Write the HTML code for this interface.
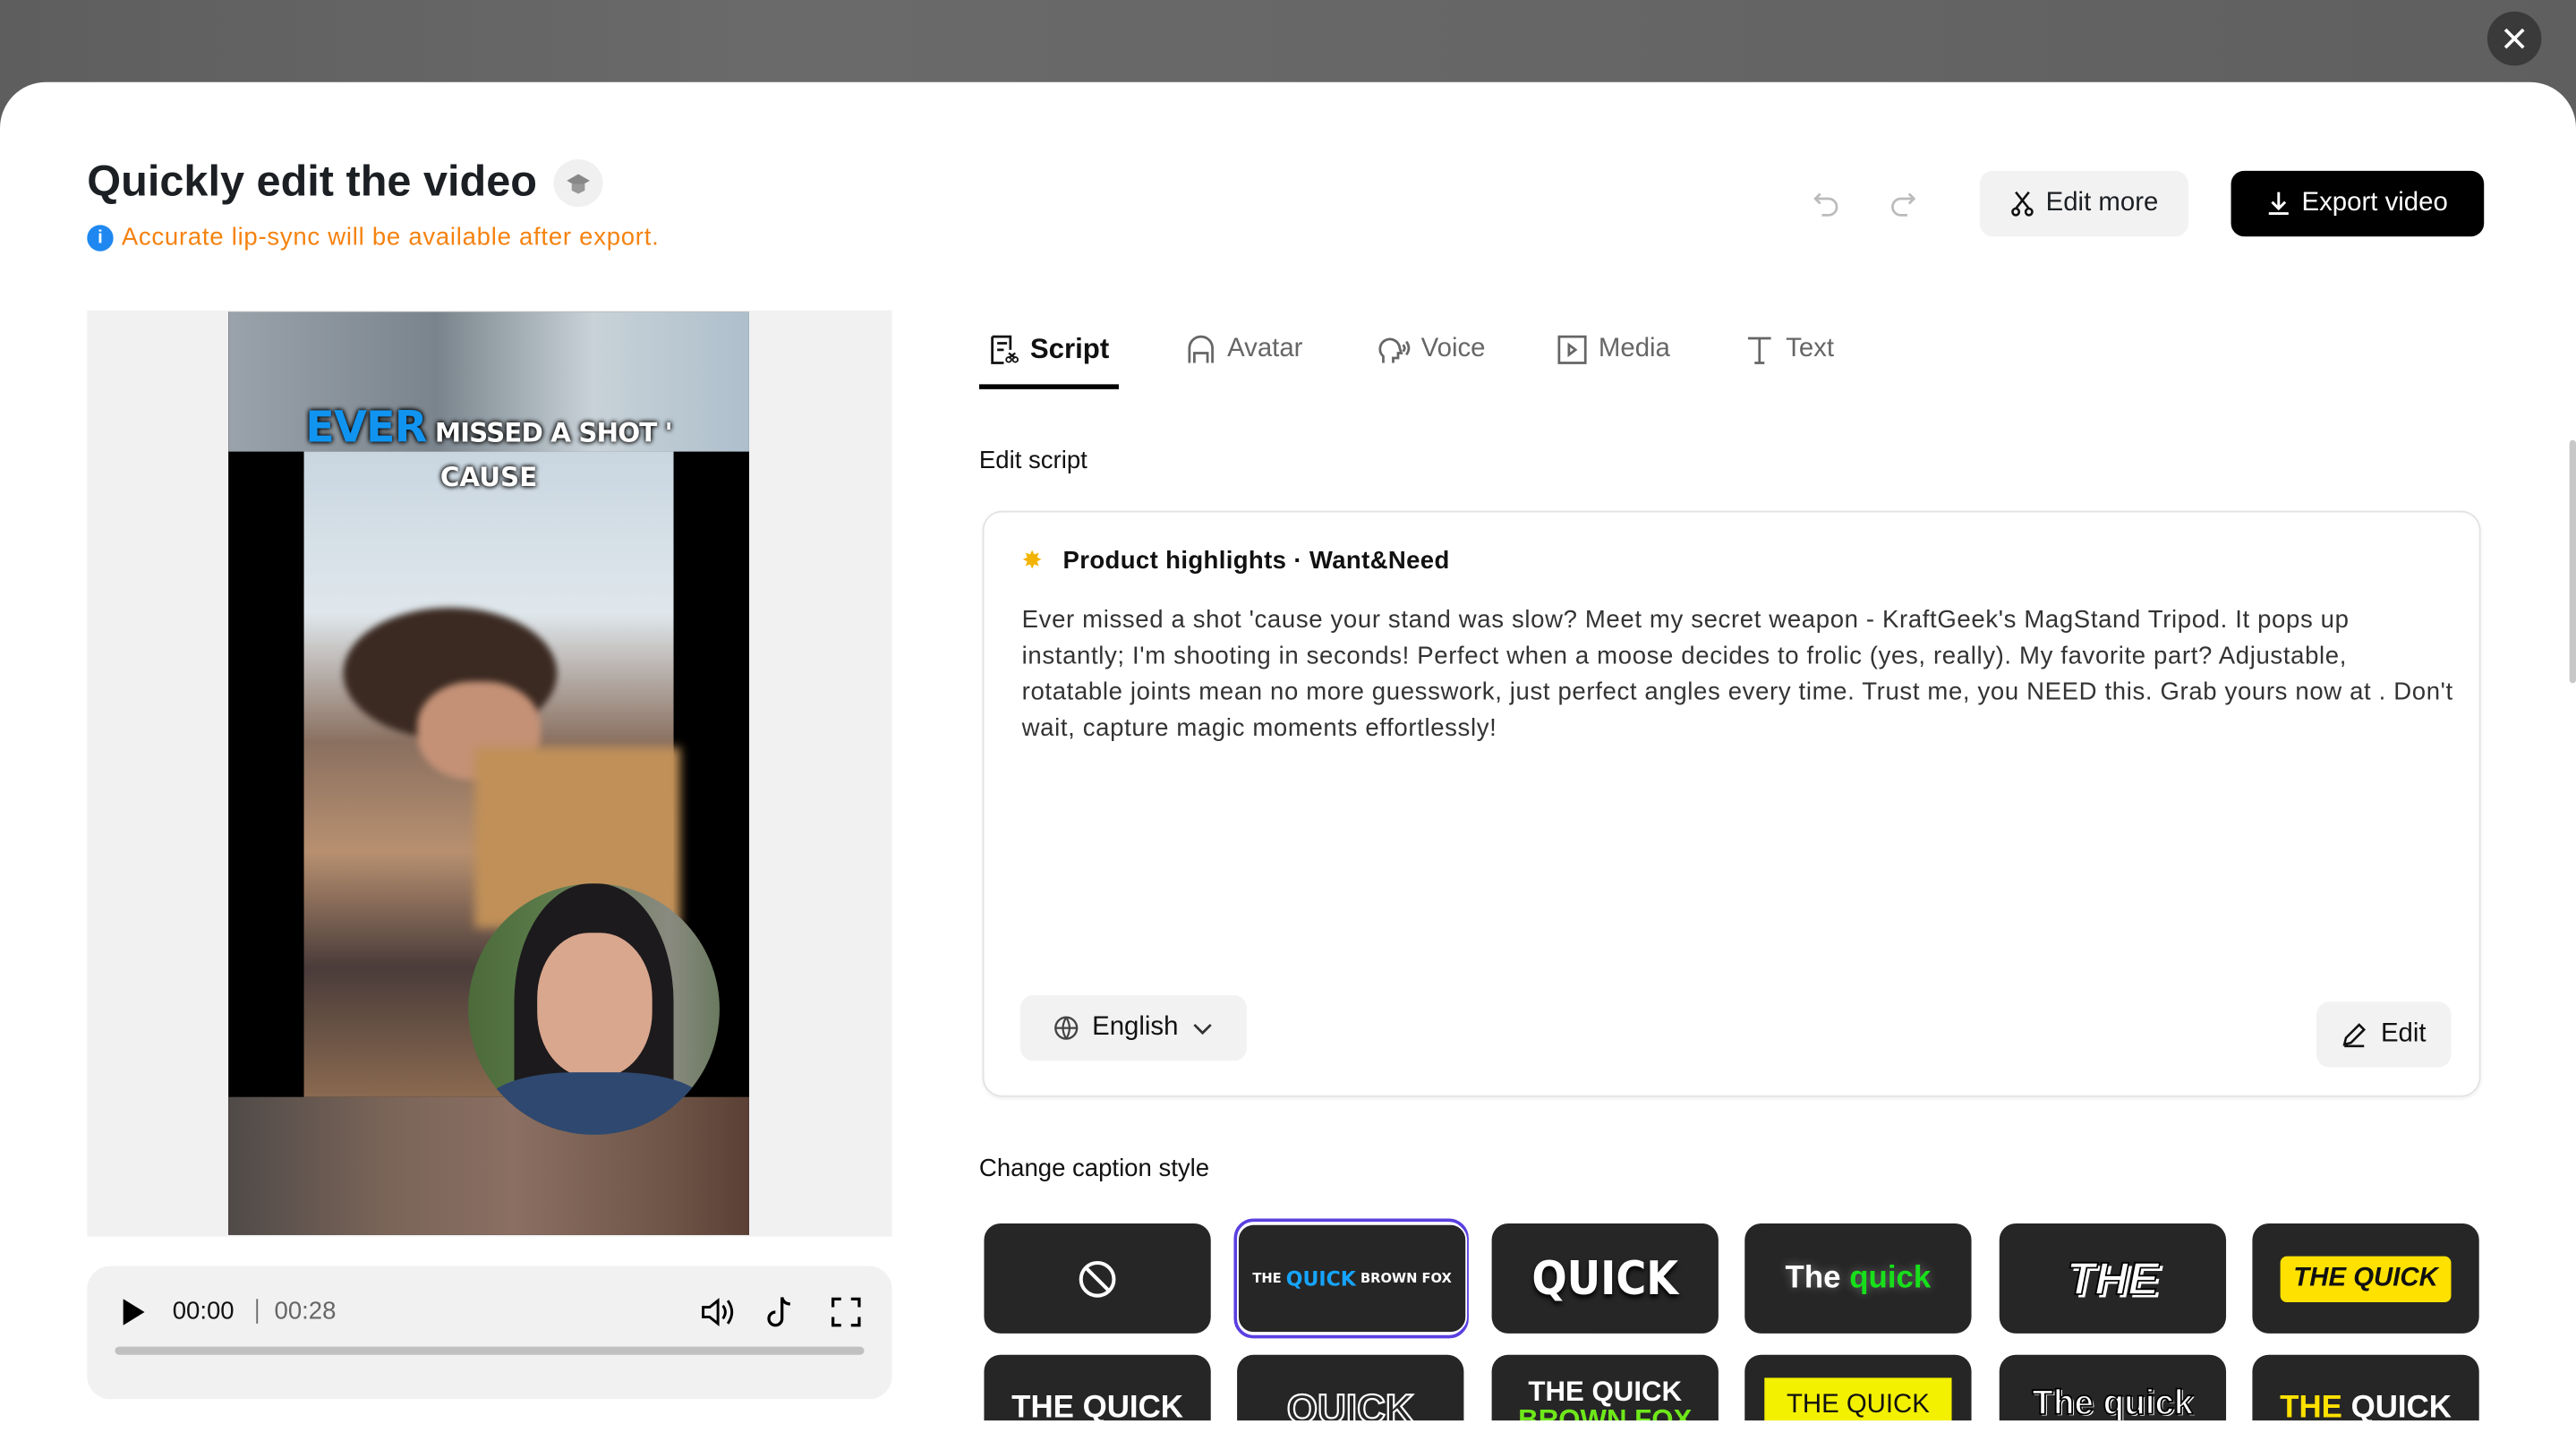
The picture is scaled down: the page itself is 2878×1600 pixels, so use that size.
<!DOCTYPE html>
<html><head><meta charset="utf-8"><style>
*{box-sizing:border-box;margin:0;padding:0}
html,body{width:2878px;height:1600px;overflow:hidden;background:#fff}
#w{position:absolute;left:0;top:0;width:1568px;height:872px;transform:scale(1.83546,1.83486);transform-origin:0 0;font-family:"Liberation Sans",sans-serif;color:#1c1f23;overflow:hidden}
.a{position:absolute}
.bg{left:0;top:0;width:1568px;height:80px;background:linear-gradient(90deg,#5e5e5e,#6a6a6a 30%,#666 60%,#5f5f5f)}
.modal{left:0;top:50px;width:1568px;height:840px;background:#fff;border-radius:28px 28px 0 0}
.btn{border-radius:8px;display:flex;align-items:center;justify-content:center;font-size:16px}
.tab{top:203px;font-size:16px;color:#666;display:flex;align-items:center;gap:6px}
.tile{width:138px;height:67px;background:#262626;border-radius:10px;display:flex;align-items:center;justify-content:center;color:#fff;font-weight:bold;overflow:hidden}
.ic{stroke:#666;fill:none;stroke-width:1.5}
</style></head><body><div id="w">
<div class="a bg"></div>
<div class="a" style="left:1514px;top:7px;width:33px;height:33px;border-radius:50%;background:#3a3a3a"></div>
<svg class="a" style="left:1522px;top:15px" width="17" height="17" viewBox="0 0 17 17"><path d="M3 3L14 14M14 3L3 14" stroke="#fff" stroke-width="2"/></svg>
<div class="a modal"></div>

<div class="a" style="left:53px;top:95px;font-size:26.5px;font-weight:600">Quickly edit the video</div>
<div class="a" style="left:337px;top:97px;width:30px;height:29px;border-radius:50%;background:#f0f0f0"></div>
<svg class="a" style="left:343px;top:103px" width="18" height="18" viewBox="0 0 18 18"><path d="M9 3L16 7L9 11L2 7Z" fill="#888"/><path d="M5 9v4l4 2 4-2V9" fill="#999"/></svg>
<div class="a" style="left:53px;top:137px;width:16px;height:16px;border-radius:50%;background:#1e88f0;color:#fff;font-size:11px;font-weight:bold;text-align:center;line-height:16px">i</div>
<div class="a" style="left:74px;top:136px;font-size:15px;color:#f5820f;letter-spacing:0.4px">Accurate lip-sync will be available after export.</div>

<svg class="a" style="left:1103px;top:115px" width="18" height="18" viewBox="0 0 18 18"><path d="M5 3L2 6L5 9M2 6h8a5 5 0 010 10H6" class="ic" style="stroke:#bbb"/></svg>
<svg class="a" style="left:1149px;top:115px" width="18" height="18" viewBox="0 0 18 18"><path d="M13 3L16 6L13 9M16 6H8a5 5 0 000 10h4" class="ic" style="stroke:#bbb"/></svg>
<div class="a btn" style="left:1205px;top:104px;width:127px;height:40px;background:#f2f2f2;gap:6px"><svg width="16" height="16" viewBox="0 0 16 16"><path d="M4 1l8 10M12 1L4 11" stroke="#111" stroke-width="1.4" fill="none"/><circle cx="4" cy="13" r="2" stroke="#111" fill="none" stroke-width="1.4"/><circle cx="12" cy="13" r="2" stroke="#111" fill="none" stroke-width="1.4"/></svg>Edit more</div>
<div class="a btn" style="left:1358px;top:104px;width:154px;height:40px;background:#000;color:#fff;gap:7px"><svg width="14" height="16" viewBox="0 0 14 16"><path d="M7 1v10M3 7l4 4 4-4M1 14h12" stroke="#fff" stroke-width="1.6" fill="none"/></svg>Export video</div>

<div class="a" style="left:53px;top:189px;width:490px;height:564px;background:#f1f1f1"></div>
<div class="a" style="left:139px;top:190px;width:317px;height:562px;background:#000;overflow:hidden">
 <div class="a" style="left:0;top:0;width:317px;height:85px;background:linear-gradient(90deg,#9aa3ab,#7a848c 40%,#c8d2d8 70%,#aebfcc)"></div>
 <div class="a" style="left:46px;top:85px;width:225px;height:393px;background:linear-gradient(180deg,#c9d6e0 0%,#dfe7ec 25%,#8a7060 45%,#b89070 62%,#4a3c3a 80%,#8a6a50 100%)"></div>
 <div class="a" style="left:70px;top:180px;width:130px;height:80px;border-radius:50%;background:#3b2a22;filter:blur(2px)"></div>
 <div class="a" style="left:115px;top:225px;width:75px;height:60px;border-radius:45%;background:#c49176;filter:blur(2px)"></div>
 <div class="a" style="left:150px;top:265px;width:125px;height:110px;background:#c09058;filter:blur(3px)"></div>
 <div class="a" style="left:0;top:478px;width:317px;height:84px;background:linear-gradient(90deg,#4f4a48,#7a6458 30%,#8a6f62 55%,#6e5446 85%,#5b4035)"></div>
 <div class="a" style="left:146px;top:348px;width:153px;height:153px;border-radius:50%;background:linear-gradient(90deg,#4c6a3a,#5a7a4a 30%,#8a8a80 80%,#6a7a60);overflow:hidden">
  <div class="a" style="left:28px;top:0;width:97px;height:150px;border-radius:48% 48% 0 0;background:#1c1a1c"></div>
  <div class="a" style="left:42px;top:30px;width:70px;height:88px;border-radius:45%;background:#d9a68e"></div>
  <div class="a" style="left:10px;top:115px;width:135px;height:50px;border-radius:40% 40% 0 0;background:#2e4870"></div>
 </div>
 <div class="a" style="left:0;top:56px;width:317px;text-align:center;font-family:'DejaVu Sans',sans-serif;font-weight:900;color:#fff;font-size:16px;text-shadow:0 0 3px #000,0 0 3px #000;letter-spacing:-0.5px"><span style="color:#1094f0;font-size:26px">EVER</span> MISSED A SHOT '</div>
 <div class="a" style="left:0;top:91px;width:317px;text-align:center;font-family:'DejaVu Sans',sans-serif;font-weight:900;color:#fff;font-size:16px;text-shadow:0 0 3px #000,0 0 3px #000">CAUSE</div>
</div>

<div class="a" style="left:53px;top:771px;width:490px;height:81px;background:#f1f1f1;border-radius:14px"></div>
<svg class="a" style="left:73px;top:790px" width="16" height="18" viewBox="0 0 16 18"><path d="M2 1L15 9L2 17Z" fill="#000"/></svg>
<div class="a" style="left:105px;top:790px;font-size:15px;color:#111">00:00</div>
<div class="a" style="left:156px;top:791px;width:1px;height:15px;background:#666"></div>
<div class="a" style="left:167px;top:790px;font-size:15px;color:#666">00:28</div>
<svg class="a" style="left:426px;top:789px" width="22" height="20" viewBox="0 0 22 20"><path d="M2 7h4l5-4v14l-5-4H2Z" stroke="#000" stroke-width="1.6" fill="none"/><path d="M14 6q3 4 0 8M17 3q5 7 0 14" stroke="#000" stroke-width="1.6" fill="none"/></svg>
<svg class="a" style="left:466px;top:788px" width="18" height="22" viewBox="0 0 18 22"><path d="M10 2v13a4 4 0 11-4-4M10 2q1 4 5 4" stroke="#000" stroke-width="1.8" fill="none"/></svg>
<svg class="a" style="left:506px;top:790px" width="18" height="18" viewBox="0 0 18 18"><path d="M1 6V1h5M12 1h5v5M17 12v5h-5M6 17H1v-5" stroke="#000" stroke-width="1.8" fill="none"/></svg>
<div class="a" style="left:70px;top:820px;width:456px;height:5px;border-radius:3px;background:#c0c0c0"></div>

<div class="a tab" style="left:601px;color:#111;font-weight:bold;font-size:17px"><svg width="20" height="20" viewBox="0 0 20 20"><path d="M3 2h11v8M3 2v16h7M6 6h6M6 10h4" stroke="#111" stroke-width="1.5" fill="none"/><circle cx="13" cy="16" r="1.5" stroke="#111" fill="none"/><circle cx="17" cy="16" r="1.5" stroke="#111" fill="none"/><path d="M13 12l4 3M17 12l-4 3" stroke="#111" stroke-width="1.2"/></svg>Script</div>
<div class="a" style="left:596px;top:234px;width:85px;height:3px;background:#000"></div>
<div class="a tab" style="left:721px"><svg width="20" height="20" viewBox="0 0 20 20"><path d="M3 18V9a7 7 0 0114 0v9M6 18v-6h8v6" class="ic"/></svg>Avatar</div>
<div class="a tab" style="left:837px"><svg width="22" height="20" viewBox="0 0 22 20"><path d="M5 18v-4a6 6 0 1110-5l1 3h-2v3h-3v3M17 7q2 2 0 4M19 5q3 4 0 8" class="ic"/></svg>Voice</div>
<div class="a tab" style="left:947px"><svg width="20" height="20" viewBox="0 0 20 20"><rect x="2" y="2" width="16" height="16" class="ic"/><path d="M8 7l4 3-4 3Z" class="ic"/></svg>Media</div>
<div class="a tab" style="left:1061px"><svg width="20" height="20" viewBox="0 0 20 20"><path d="M3 3h14M10 3v15M7 18h6" class="ic"/></svg>Text</div>

<div class="a" style="left:596px;top:272px;font-size:15px;color:#111">Edit script</div>
<div class="a" style="left:598px;top:311px;width:912px;height:357px;border:1px solid #e3e3e3;border-radius:12px;box-shadow:0 1px 2px rgba(0,0,0,0.06)"></div>
<div class="a" style="left:622px;top:332px;font-size:15px;color:#f2b400">✸</div>
<div class="a" style="left:647px;top:333px;font-size:15px;font-weight:600;color:#111;letter-spacing:0.2px">Product highlights · Want&amp;Need</div>
<div class="a" style="left:622px;top:367px;white-space:nowrap;font-size:15px;line-height:22px;color:#333;letter-spacing:0.35px">Ever missed a shot 'cause your stand was slow? Meet my secret weapon - KraftGeek's MagStand Tripod. It pops up<br>instantly; I'm shooting in seconds! Perfect when a moose decides to frolic (yes, really). My favorite part? Adjustable,<br>rotatable joints mean no more guesswork, just perfect angles every time. Trust me, you NEED this. Grab yours now at . Don't<br>wait, capture magic moments effortlessly!</div>
<div class="a btn" style="left:621px;top:606px;width:138px;height:40px;background:#f2f2f2;gap:8px;color:#111"><svg width="16" height="16" viewBox="0 0 16 16"><circle cx="8" cy="8" r="6.5" stroke="#444" fill="none" stroke-width="1.3"/><path d="M1.5 8h13M8 1.5q-4 6.5 0 13M8 1.5q4 6.5 0 13" stroke="#444" fill="none" stroke-width="1.2"/></svg>English<svg width="14" height="14" viewBox="0 0 14 14"><path d="M2 5l5 5 5-5" stroke="#333" fill="none" stroke-width="1.5"/></svg></div>
<div class="a btn" style="left:1410px;top:610px;width:82px;height:40px;background:#f2f2f2;gap:8px;color:#111"><svg width="16" height="16" viewBox="0 0 16 16"><path d="M2 14l1-4 8-8 3 3-8 8ZM2 15h12" stroke="#111" fill="none" stroke-width="1.4"/></svg>Edit</div>

<div class="a" style="left:596px;top:703px;font-size:15px;color:#111">Change caption style</div>
<div class="a" style="left:751px;top:742px;width:143px;height:73px;border:2px solid #5b3fe0;border-radius:12px"></div>
<div class="a tile" style="left:599px;top:745px"><svg width="24" height="24" viewBox="0 0 24 24"><circle cx="12" cy="12" r="10" stroke="#fff" stroke-width="2.2" fill="none"/><path d="M5 5l14 14" stroke="#fff" stroke-width="2.2"/></svg></div>
<div class="a tile" style="left:753px;top:745px;width:140px;border:1.5px solid #fff;font-size:8px;font-family:'DejaVu Sans'">THE&nbsp;<span style="color:#16a4ff;font-size:12px">QUICK</span>&nbsp;BROWN FOX</div>
<div class="a tile" style="left:908px;top:745px;font-size:28px;font-family:'DejaVu Sans Condensed','DejaVu Sans';text-shadow:0 2px 3px #000">QUICK</div>
<div class="a tile" style="left:1062px;top:745px;font-size:19px;text-shadow:0 0 6px #fff5">The&nbsp;<span style="color:#17e01a">quick</span></div>
<div class="a tile" style="left:1217px;top:745px;font-size:28px;font-style:italic;-webkit-text-stroke:1px #000;text-shadow:2px 2px 0 #fff">THE</div>
<div class="a tile" style="left:1371px;top:745px"><span style="background:#ffe100;color:#111;font-style:italic;font-size:16px;padding:5px 8px;border-radius:4px">THE QUICK</span></div>
<div class="a tile" style="left:599px;top:825px;align-items:flex-start;padding-top:22px;font-size:19px">THE QUICK</div>
<div class="a tile" style="left:753px;top:825px;align-items:flex-start;padding-top:20px;font-size:24px;color:#262626;-webkit-text-stroke:1.2px #fff">QUICK</div>
<div class="a tile" style="left:908px;top:825px;flex-direction:column;justify-content:flex-start;padding-top:14px;font-size:17px;line-height:17px">THE QUICK<span style="color:#6fe81a">BROWN FOX</span></div>
<div class="a tile" style="left:1062px;top:825px;align-items:flex-start;padding-top:14px"><span style="background:#f3f000;color:#111;font-weight:normal;font-size:16px;padding:8px 13px 10px">THE QUICK</span></div>
<div class="a tile" style="left:1217px;top:825px;align-items:flex-start;padding-top:18px;font-size:21px;-webkit-text-stroke:1px #000;text-shadow:1px 1px 0 #fff">The quick</div>
<div class="a tile" style="left:1371px;top:825px;align-items:flex-start;padding-top:22px;font-size:19px"><span style="color:#ffe100">THE</span>&nbsp;QUICK</div>
<div class="a" style="left:0;top:865px;width:1568px;height:10px;background:#fff"></div>
<div class="a" style="left:1564px;top:268px;width:4px;height:148px;background:#c8c8c8;border-radius:2px"></div>
</div></body></html>
